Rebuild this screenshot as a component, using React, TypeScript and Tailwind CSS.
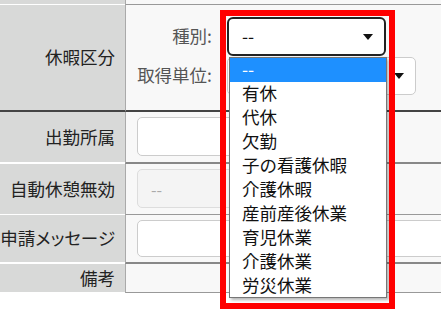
import React from 'react';

const options = ['--', '有休', '代休', '欠勤', '子の看護休暇', '介護休暇', '産前産後休業', '育児休業', '介護休業', '労災休業'];

const Caret: React.FC<{ className?: string }> = ({ className }) => (
  <svg width="10" height="6" viewBox="0 0 10 6" className={className}>
    <path d="M0 0 L10 0 L5 6 Z" fill="#111" />
  </svg>
);

interface RowProps {
  label: string;
  height: string;
  labelBorder: string;
  cellBorder: string;
  children?: React.ReactNode;
}

const Row: React.FC<RowProps> = ({ label, height, labelBorder, cellBorder, children }) => (
  <div className={`flex ${height}`}>
    <div className={`w-[125px] shrink-0 bg-[#d8d9d8] flex items-center justify-end pr-[10px] text-[#222] whitespace-nowrap [font-feature-settings:'palt'] ${labelBorder}`}>
      {label}
    </div>
    <div className={`flex-1 bg-[#f8f8f8] border-l border-l-[#aaa] ${cellBorder}`}>{children}</div>
  </div>
);

export default function App() {
  return (
    <div className="relative w-[441px] h-[315px] overflow-hidden bg-white text-[17.5px] font-['Noto_Sans_CJK_JP','Noto_Sans',sans-serif]">
      {/* previous row tail */}
      <Row label="" height="h-[5px]" labelBorder="border-b border-b-white" cellBorder="border-b border-b-[#999]" />

      {/* 休暇区分 */}
      <Row label="休暇区分" height="h-[107px]" labelBorder="border-b-2 border-b-[#444]" cellBorder="border-b-2 border-b-[#444]">
        <div className="pt-[12px] flex flex-col">
          <div className="flex items-center h-[39px]">
            <div className="w-[86px] text-right text-[#555]">種別:</div>
            <div className="ml-[15px] w-[159px] h-[39px] bg-white border-2 border-[#222] rounded-[6px] flex items-center justify-between pl-[13px] pr-[11px] text-[#111]">
              <span>--</span>
              <Caret />
            </div>
          </div>
          <div className="flex items-center h-[39px]">
            <div className="w-[86px] text-right text-[#555]">取得単位:</div>
            <div className="ml-[15px] w-[189px] h-[38px] bg-white border border-[#ccc] rounded-[5px] flex items-center justify-end pr-[11px]">
              <Caret />
            </div>
          </div>
        </div>
      </Row>

      {/* 出勤所属 */}
      <Row label="出勤所属" height="h-[52px]" labelBorder="border-b-2 border-b-white" cellBorder="border-b-2 border-b-[#888]">
        <div className="pt-[5px] pl-[11px]">
          <div className="w-[250px] h-[39px] bg-white border border-[#ccc] rounded-[5px]" />
        </div>
      </Row>

      {/* 自動休憩無効 */}
      <Row label="自動休憩無効" height="h-[51px]" labelBorder="border-b border-b-white" cellBorder="border-b border-b-[#999]">
        <div className="pt-[5px] pl-[11px]">
          <div className="w-[250px] h-[39px] bg-[#f4f4f4] border border-[#ddd] rounded-[5px] flex items-center pl-[13px] text-[#aaa] text-[16px]">
            --
          </div>
        </div>
      </Row>

      {/* 申請メッセージ */}
      <Row label="申請メッセージ" height="h-[49px]" labelBorder="border-b-2 border-b-white" cellBorder="border-b-2 border-b-[#888]">
        <div className="pt-[5px] pl-[11px]">
          <div className="w-[330px] h-[37px] bg-white border border-[#ccc] rounded-[5px]" />
        </div>
      </Row>

      {/* 備考 */}
      <Row label="備考" height="h-[29px]" labelBorder="border-b border-b-white" cellBorder="border-b border-b-[#999]" />

      {/* open dropdown list */}
      <ul className="absolute left-[229px] top-[57px] w-[158px] h-[241px] bg-white border border-[#767676] shadow-[2px_2px_3px_rgba(0,0,0,0.3)] text-[#111]">
        {options.map((o, i) => (
          <li
            key={o}
            className={`h-[24px] leading-[22px] pl-[12px] ${i === 0 ? 'bg-[#1e90ff] text-white' : ''}`}
          >
            {o}
          </li>
        ))}
      </ul>

      {/* red highlight frame */}
      <div className="absolute left-[220px] top-[10px] w-[175px] h-[299px] border-[6px] border-[#ff0000] pointer-events-none" />
    </div>
  );
}
